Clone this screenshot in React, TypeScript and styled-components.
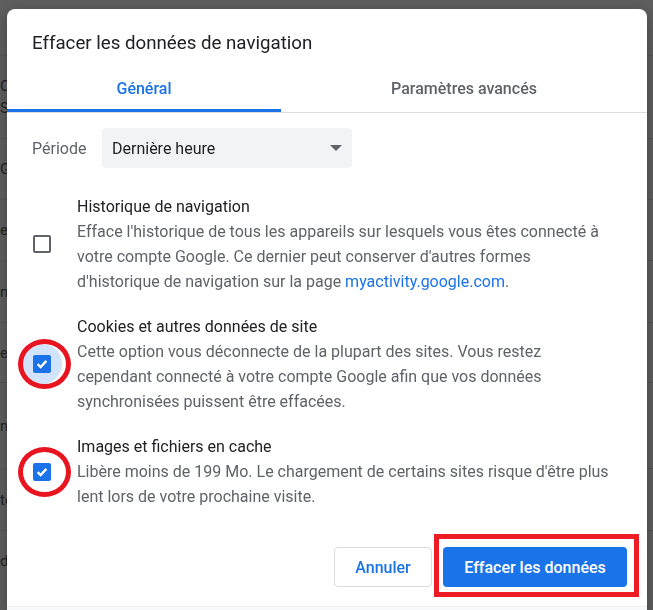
import React from 'react';
import styled, { createGlobalStyle } from 'styled-components';

const GlobalStyle = createGlobalStyle`
  html, body {
    margin: 0;
    padding: 0;
    height: 100%;
    overflow: hidden;
  }
  body {
    font-family: Roboto, "Liberation Sans", Arial, sans-serif;
    background: #5d5d5d;
  }
`;

// dimmed settings page behind the dialog
const Backdrop = styled.div`
  height: 610px;
  background: #5e5e5e;
  padding-top: 55px;
  box-sizing: border-box;
`;

const BackRow = styled.div<{ $h: number }>`
  height: ${(p) => p.$h}px;
  border-top: 1px solid #535353;
  display: flex;
  flex-direction: column;
  justify-content: center;
  font-size: 15px;
  line-height: 22px;
  color: #222;
  white-space: nowrap;
  overflow: hidden;
`;

const Dialog = styled.div`
  position: fixed;
  top: 9px;
  left: 7px;
  width: 640px;
  height: 660px;
  background: #fff;
  border-radius: 8px;
  box-shadow: 0 4px 14px rgba(0, 0, 0, 0.28);
  display: flex;
  flex-direction: column;
  overflow: hidden;
`;

const Title = styled.h1`
  margin: 0;
  padding: 22px 25px 9px;
  font-size: 18.7px;
  font-weight: 400;
  line-height: 24px;
  color: #202124;
`;

const TabBar = styled.div`
  display: flex;
  height: 48px;
  border-bottom: 1px solid #dadce0;
`;

const Tab = styled.div<{ $active?: boolean; $width?: number }>`
  position: relative;
  ${(p) => (p.$width ? `width: ${p.$width}px;` : 'flex: 1;')}
  display: flex;
  align-items: center;
  justify-content: center;
  font-size: 16px;
  font-weight: 500;
  color: ${(p) => (p.$active ? '#1a73e8' : '#5f6368')};

  &::after {
    content: '';
    position: absolute;
    left: 0;
    right: 0;
    bottom: 0;
    height: 3px;
    background: ${(p) => (p.$active ? '#1a73e8' : 'transparent')};
  }
`;

const Body = styled.div`
  padding: 15px 25px 0;
`;

const PeriodRow = styled.div`
  display: flex;
  align-items: center;
`;

const PeriodLabel = styled.span`
  width: 70px;
  font-size: 16px;
  color: #5f6368;
`;

const Select = styled.div`
  width: 250px;
  height: 40px;
  box-sizing: border-box;
  padding: 0 10px;
  background: #f1f3f4;
  border-radius: 4px;
  display: flex;
  align-items: center;
  justify-content: space-between;
  font-size: 16px;
  color: #202124;
`;

const Options = styled.div`
  margin-top: 26px;
  display: flex;
  flex-direction: column;
  gap: 20px;
`;

const Option = styled.div`
  display: flex;
  align-items: center;
`;

const BoxWrap = styled.div`
  position: relative;
  width: 18px;
  height: 18px;
  margin-left: 1px;
  margin-right: 26px;
  flex-shrink: 0;
`;

const Ripple = styled.div`
  position: absolute;
  left: -11px;
  top: -11px;
  width: 40px;
  height: 40px;
  border-radius: 50%;
  background: #d2e3fc;
`;

const Box = styled.div<{ $checked?: boolean }>`
  position: relative;
  width: 18px;
  height: 18px;
  box-sizing: border-box;
  border-radius: 2px;
  border: ${(p) => (p.$checked ? 'none' : '2px solid #5f6368')};
  background: ${(p) => (p.$checked ? '#1a73e8' : '#fff')};
  display: flex;
  align-items: center;
  justify-content: center;
`;

const Ring = styled.div`
  position: absolute;
  left: -15px;
  top: -16px;
  width: 53px;
  height: 50px;
  box-sizing: border-box;
  border: 5px solid #e8141f;
  border-radius: 50%;
  pointer-events: none;
`;

const OptionText = styled.div`
  width: 535px;
  font-size: 16px;
  line-height: 25px;
`;

const OptionTitle = styled.div`
  color: #202124;
`;

const OptionDesc = styled.div`
  color: #5f6368;

  a {
    color: #1a73e8;
    text-decoration: none;
  }
`;

const Footer = styled.div`
  margin-top: 38px;
  padding: 0 20px 19px;
  display: flex;
  justify-content: flex-end;
  align-items: center;
  gap: 11px;
`;

const Button = styled.button<{ $primary?: boolean; $width: number }>`
  width: ${(p) => p.$width}px;
  height: 40px;
  padding: 0;
  box-sizing: border-box;
  border-radius: 4px;
  font-family: inherit;
  font-size: 16px;
  font-weight: 500;
  cursor: pointer;
  border: ${(p) => (p.$primary ? 'none' : '1px solid #dadce0')};
  background: ${(p) => (p.$primary ? '#1a73e8' : '#fff')};
  color: ${(p) => (p.$primary ? '#fff' : '#1a73e8')};
`;

const Highlight = styled.div`
  position: relative;
`;

const Frame = styled.div`
  position: absolute;
  left: -9px;
  top: -13px;
  right: -12px;
  bottom: -10px;
  border: 5px solid #ed1c24;
  pointer-events: none;
`;

const BottomBar = styled.div`
  flex: 1;
  background: #f8f9fa;
  border-top: 1px solid #eeeff1;
`;

const Check = () => (
  <svg width="14" height="14" viewBox="0 0 14 14">
    <path d="M2.6 7.2 L5.6 10.1 L11.4 3.9" fill="none" stroke="#fff" strokeWidth="2.3" />
  </svg>
);

const Arrow = () => (
  <svg width="12" height="6" viewBox="0 0 12 6">
    <path d="M0 0 L12 0 L6 6 Z" fill="#5f6368" />
  </svg>
);

interface OptionData {
  title: string;
  desc: React.ReactNode;
  checked: boolean;
  ripple?: boolean;
  marked?: boolean;
}

const options: OptionData[] = [
  {
    title: 'Historique de navigation',
    desc: (
      <>
        Efface l'historique de tous les appareils sur lesquels vous êtes connecté à votre compte
        Google. Ce dernier peut conserver d'autres formes d'historique de navigation sur la page{' '}
        <a href="#">myactivity.google.com</a>.
      </>
    ),
    checked: false,
  },
  {
    title: 'Cookies et autres données de site',
    desc: 'Cette option vous déconnecte de la plupart des sites. Vous restez cependant connecté à votre compte Google afin que vos données synchronisées puissent être effacées.',
    checked: true,
    ripple: true,
    marked: true,
  },
  {
    title: 'Images et fichiers en cache',
    desc: "Libère moins de 199 Mo. Le chargement de certains sites risque d'être plus lent lors de votre prochaine visite.",
    checked: true,
    marked: true,
  },
];

const backRows = [
  { h: 82, lines: ['Cookies tiers', 'Sites autorisés'] },
  { h: 60, lines: ['Google'] },
  { h: 60, lines: ['e'] },
  { h: 61, lines: ['notifications'] },
  { h: 59, lines: ['espace'] },
  { h: 85, lines: ['navigation'] },
  { h: 61, lines: ['tests'] },
  { h: 60, lines: ['données'] },
];

const App: React.FC = () => {
  return (
    <>
      <GlobalStyle />
      <Backdrop>
        {backRows.map((row, i) => (
          <BackRow key={i} $h={row.h}>
            {row.lines.map((l) => (
              <span key={l}>{l}</span>
            ))}
          </BackRow>
        ))}
      </Backdrop>
      <Dialog>
        <Title>Effacer les données de navigation</Title>
        <TabBar>
          <Tab $active $width={274}>Général</Tab>
          <Tab>Paramètres avancés</Tab>
        </TabBar>
        <Body>
          <PeriodRow>
            <PeriodLabel>Période</PeriodLabel>
            <Select>
              <span>Dernière heure</span>
              <Arrow />
            </Select>
          </PeriodRow>
          <Options>
            {options.map((opt) => (
              <Option key={opt.title}>
                <BoxWrap>
                  {opt.ripple && <Ripple />}
                  <Box $checked={opt.checked}>{opt.checked && <Check />}</Box>
                  {opt.marked && <Ring />}
                </BoxWrap>
                <OptionText>
                  <OptionTitle>{opt.title}</OptionTitle>
                  <OptionDesc>{opt.desc}</OptionDesc>
                </OptionText>
              </Option>
            ))}
          </Options>
        </Body>
        <Footer>
          <Button $width={98}>Annuler</Button>
          <Highlight>
            <Button $primary $width={184}>
              Effacer les données
            </Button>
            <Frame />
          </Highlight>
        </Footer>
        <BottomBar />
      </Dialog>
    </>
  );
};

export default App;
